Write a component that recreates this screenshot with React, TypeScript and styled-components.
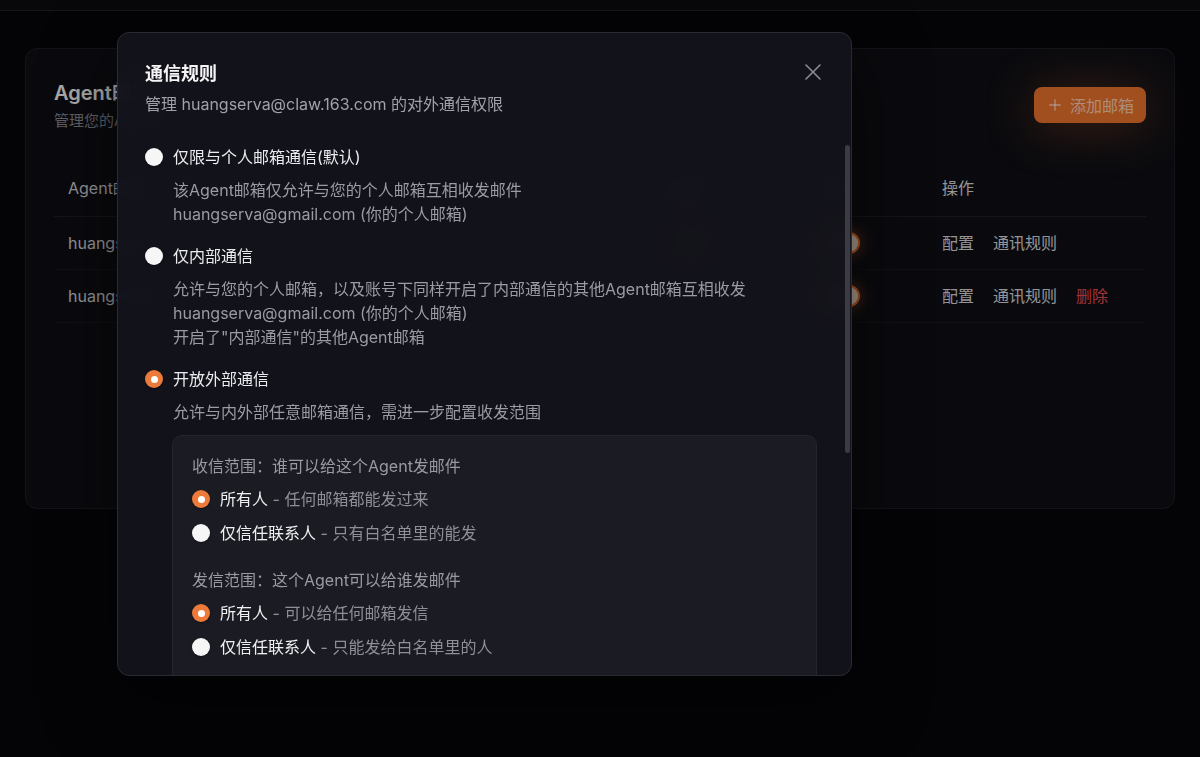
import React from "react";
import styled, { createGlobalStyle } from "styled-components";
import { Plus, X } from "lucide-react";

const GlobalStyle = createGlobalStyle`
  body {
    margin: 0;
    background: #07070b;
    font-family: Inter, "Noto Sans CJK SC", sans-serif;
    -webkit-font-smoothing: antialiased;
  }
`;

const Page = styled.div`
  min-height: 757px;
`;

const TopBar = styled.header`
  height: 10px;
  background: #0c0c11;
  border-bottom: 1px solid #20202a;
`;

const Main = styled.main`
  padding: 37px 25px 0;
`;

const Card = styled.section`
  box-sizing: border-box;
  min-height: 461px;
  background: #0f0f15;
  border: 1px solid #1c1c25;
  border-radius: 12px;
  padding: 32px 28px 0;
`;

const CardHead = styled.div`
  display: flex;
  align-items: flex-start;
  justify-content: space-between;
`;

const CardTitle = styled.h2`
  margin: 0;
  font-size: 20px;
  line-height: 24px;
  font-weight: 600;
  color: #f2f2f4;
`;

const CardSub = styled.p`
  margin: 4px 0 0;
  font-size: 15px;
  line-height: 24px;
  color: #8a8a94;
`;

const AddButton = styled.button`
  margin-top: 6px;
  display: flex;
  align-items: center;
  gap: 6px;
  height: 36px;
  width: 112px;
  justify-content: center;
  border: none;
  border-radius: 8px;
  background: #e8712e;
  color: rgba(255, 236, 222, 0.72);
  font: inherit;
  font-size: 16px;
  box-shadow: 0 4px 48px rgba(236, 116, 48, 0.35);
`;

const Table = styled.div`
  margin-top: 27px;
`;

const Row = styled.div<{ $head?: boolean }>`
  display: grid;
  grid-template-columns: 586px 166px 122px 1fr;
  align-items: center;
  height: ${(p) => (p.$head ? "56px" : "52px")};
  border-bottom: 1px solid ${(p) => (p.$head ? "#1d1d26" : "#17171f")};
  font-size: 16px;
  line-height: 24px;
  color: #d4d4d8;
`;

const Cell = styled.div`
  padding-left: 14px;
  display: flex;
  align-items: center;
  gap: 19px;
  white-space: nowrap;
`;

const Badge = styled.span<{ $tone: "orange" | "gray" }>`
  padding: 2px 10px;
  border-radius: 6px;
  font-size: 13px;
  background: ${(p) => (p.$tone === "orange" ? "rgba(236,116,48,0.22)" : "rgba(120,120,140,0.14)")};
  color: ${(p) => (p.$tone === "orange" ? "#f6a571" : "#a4a4ac")};
`;

const Toggle = styled.span`
  display: flex;
  justify-content: flex-end;
  align-items: center;
  box-sizing: border-box;
  width: 40px;
  height: 22px;
  padding: 2px;
  border-radius: 11px;
  background: #ec7430;
  box-shadow: 0 0 16px rgba(236, 116, 48, 0.55);

  &::after {
    content: "";
    width: 18px;
    height: 18px;
    border-radius: 50%;
    background: #f3dccb;
  }
`;

const Action = styled.span<{ $danger?: boolean }>`
  color: ${(p) => (p.$danger ? "#e5484d" : "#d4d4d8")};
`;

const Overlay = styled.div`
  position: fixed;
  inset: 0;
  background: rgba(0, 0, 0, 0.3);
  padding: 32px 0 0 117px;
`;

const Modal = styled.div`
  position: relative;
  box-sizing: border-box;
  width: 735px;
  height: 644px;
  display: flex;
  flex-direction: column;
  background: rgba(19, 19, 27, 0.96);
  backdrop-filter: blur(18px);
  border: 1px solid #2a2a34;
  border-radius: 12px;
  box-shadow: 0 24px 70px rgba(0, 0, 0, 0.6);
  overflow: hidden;
`;

const ModalHead = styled.div`
  display: flex;
  justify-content: space-between;
  align-items: flex-start;
  padding: 28px 24px 24px 27px;
`;

const ModalTitle = styled.h3`
  margin: 0;
  font-size: 18px;
  line-height: 26px;
  font-weight: 600;
  color: #f4f4f5;
`;

const ModalSub = styled.p`
  margin: 5px 0 0;
  font-size: 16px;
  line-height: 24px;
  color: #a1a1aa;
`;

const CloseButton = styled.button`
  margin-top: -3px;
  padding: 0;
  border: none;
  background: none;
  color: #8b8b95;
  display: flex;
`;

const ModalBody = styled.div`
  flex: 1;
  overflow-y: auto;
  padding: 5px 34px 28px 27px;
  scrollbar-width: none;

  &::-webkit-scrollbar {
    display: none;
  }
`;

/* custom thumb drawn over the scroll area's right edge */
const ScrollThumb = styled.div`
  position: absolute;
  right: 1px;
  top: 112px;
  width: 5px;
  height: 308px;
  border-radius: 3px;
  background: #3b3b45;
`;

const Option = styled.div`
  & + & {
    margin-top: 18px;
  }
`;

const OptionRow = styled.label`
  display: flex;
  align-items: center;
  gap: 10px;
  font-size: 16px;
  line-height: 24px;
  color: #ececf0;
`;

const RadioDot = styled.span<{ $checked?: boolean }>`
  flex: none;
  width: 18px;
  height: 18px;
  border-radius: 50%;
  display: flex;
  align-items: center;
  justify-content: center;
  background: ${(p) => (p.$checked ? "#ec7a3b" : "#f6f6f7")};
  box-shadow: 0 1px 2px rgba(0, 0, 0, 0.4);

  &::after {
    content: "";
    display: ${(p) => (p.$checked ? "block" : "none")};
    width: 7px;
    height: 7px;
    border-radius: 50%;
    background: #fff;
  }
`;

const Desc = styled.div`
  margin-top: 9px;
  padding-left: 28px;
  font-size: 16px;
  line-height: 24px;
  color: #9b9ba5;
`;

const ScopePanel = styled.div`
  margin: 11px 0 0 27px;
  padding: 18px 20px 24px 19px;
  background: #1b1b23;
  border: 1px solid #25252e;
  border-radius: 10px;
`;

const ScopeTitle = styled.div<{ $spaced?: boolean }>`
  margin-top: ${(p) => (p.$spaced ? "23px" : "0")};
  font-size: 16px;
  line-height: 24px;
  color: #9a9aa3;
`;

const ScopeRow = styled.label`
  display: flex;
  align-items: center;
  gap: 10px;
  margin-top: 9px;
  font-size: 16px;
  line-height: 24px;
  color: #f0f0f2;

  & + & {
    margin-top: 10px;
  }
`;

const Hint = styled.span`
  color: #8f8f99;
`;

const Section = styled.div`
  margin-top: 24px;
`;

const InputRow = styled.div`
  display: flex;
  gap: 10px;
  margin-top: 12px;
`;

const Input = styled.div`
  flex: 1;
  height: 40px;
  box-sizing: border-box;
  padding: 0 12px;
  display: flex;
  align-items: center;
  border: 1px solid #2c2c36;
  border-radius: 8px;
  background: #16161e;
  color: #6b6b75;
  font-size: 15px;
`;

const GhostButton = styled.button<{ $primary?: boolean }>`
  height: 40px;
  padding: 0 18px;
  border-radius: 8px;
  border: 1px solid ${(p) => (p.$primary ? "#ec7430" : "#2c2c36")};
  background: ${(p) => (p.$primary ? "#ec7430" : "#1b1b23")};
  color: #f0f0f2;
  font: inherit;
  font-size: 15px;
`;

const Contact = styled.div`
  display: flex;
  justify-content: space-between;
  align-items: center;
  height: 44px;
  border-bottom: 1px solid #22222b;
  font-size: 15px;
  color: #c4c4cc;
`;

const Footer = styled.div`
  display: flex;
  justify-content: flex-end;
  gap: 12px;
  margin-top: 28px;
  padding-top: 20px;
  border-top: 1px solid #22222b;
`;

const accounts = [
  { email: "huangserva@claw.163.com", mode: "外部通信", tone: "orange" as const, removable: false },
  { email: "huangserva-bot@claw.163.com", mode: "仅内部", tone: "gray" as const, removable: true },
];

const scopes = [
  {
    title: "收信范围：谁可以给这个Agent发邮件",
    items: [
      { name: "所有人", hint: "任何邮箱都能发过来", checked: true },
      { name: "仅信任联系人", hint: "只有白名单里的能发", checked: false },
    ],
  },
  {
    title: "发信范围：这个Agent可以给谁发邮件",
    items: [
      { name: "所有人", hint: "可以给任何邮箱发信", checked: true },
      { name: "仅信任联系人", hint: "只能发给白名单里的人", checked: false },
    ],
  },
];

export default function App() {
  return (
    <Page>
      <GlobalStyle />
      <TopBar />
      <Main>
        <Card>
          <CardHead>
            <div>
              <CardTitle>Agent邮箱</CardTitle>
              <CardSub>管理您的Agent邮箱及其通信规则</CardSub>
            </div>
            <AddButton>
              <Plus size={18} strokeWidth={1.8} />
              添加邮箱
            </AddButton>
          </CardHead>
          <Table>
            <Row $head>
              <Cell>Agent邮箱</Cell>
              <Cell>通信规则</Cell>
              <Cell>状态</Cell>
              <Cell>操作</Cell>
            </Row>
            {accounts.map((a) => (
              <Row key={a.email}>
                <Cell>{a.email}</Cell>
                <Cell>
                  <Badge $tone={a.tone}>{a.mode}</Badge>
                </Cell>
                <Cell>
                  <Toggle />
                </Cell>
                <Cell>
                  <Action>配置</Action>
                  <Action>通讯规则</Action>
                  {a.removable && <Action $danger>删除</Action>}
                </Cell>
              </Row>
            ))}
          </Table>
        </Card>
      </Main>

      <Overlay>
        <Modal>
          <ModalHead>
            <div>
              <ModalTitle>通信规则</ModalTitle>
              <ModalSub>管理 huangserva@claw.163.com 的对外通信权限</ModalSub>
            </div>
            <CloseButton>
              <X size={28} strokeWidth={1.3} />
            </CloseButton>
          </ModalHead>
          <ModalBody>
            <Option>
              <OptionRow>
                <RadioDot />
                仅限与个人邮箱通信(默认)
              </OptionRow>
              <Desc>
                该Agent邮箱仅允许与您的个人邮箱互相收发邮件
                <br />
                huangserva@gmail.com (你的个人邮箱)
              </Desc>
            </Option>
            <Option>
              <OptionRow>
                <RadioDot />
                仅内部通信
              </OptionRow>
              <Desc>
                允许与您的个人邮箱，以及账号下同样开启了内部通信的其他Agent邮箱互相收发
                <br />
                huangserva@gmail.com (你的个人邮箱)
                <br />
                开启了"内部通信"的其他Agent邮箱
              </Desc>
            </Option>
            <Option>
              <OptionRow>
                <RadioDot $checked />
                开放外部通信
              </OptionRow>
              <Desc>允许与内外部任意邮箱通信，需进一步配置收发范围</Desc>
              <ScopePanel>
                {scopes.map((s, i) => (
                  <div key={s.title}>
                    <ScopeTitle $spaced={i > 0}>{s.title}</ScopeTitle>
                    {s.items.map((it) => (
                      <ScopeRow key={it.name}>
                        <RadioDot $checked={it.checked} />
                        <span>
                          {it.name} <Hint>- {it.hint}</Hint>
                        </span>
                      </ScopeRow>
                    ))}
                  </div>
                ))}
              </ScopePanel>
            </Option>

            <Section>
              <ScopeTitle>信任联系人白名单</ScopeTitle>
              <InputRow>
                <Input>输入邮箱地址</Input>
                <GhostButton>添加</GhostButton>
              </InputRow>
              <Contact>
                <span>huangserva@gmail.com</span>
                <Hint>移除</Hint>
              </Contact>
              <Contact>
                <span>team@claw.163.com</span>
                <Hint>移除</Hint>
              </Contact>
            </Section>

            <Footer>
              <GhostButton>取消</GhostButton>
              <GhostButton $primary>保存</GhostButton>
            </Footer>
          </ModalBody>
          <ScrollThumb />
        </Modal>
      </Overlay>
    </Page>
  );
}
